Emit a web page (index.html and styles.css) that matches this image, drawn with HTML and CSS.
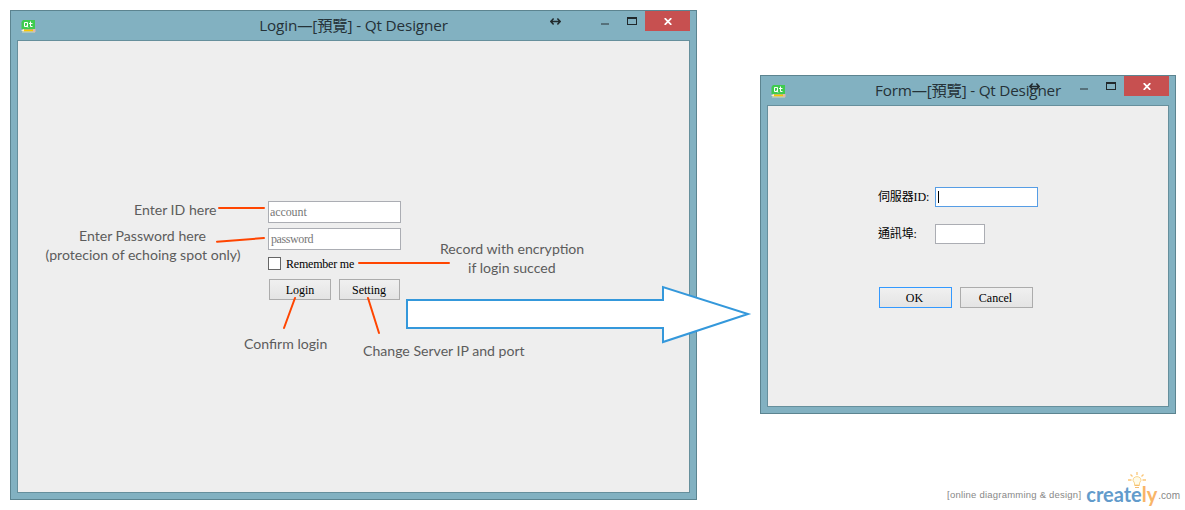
FILE: index.html
```
<!DOCTYPE html>
<html lang="zh-Hant">
<head>
<meta charset="utf-8">
<title>Login flow</title>
<link rel="stylesheet" href="styles.css">
</head>
<body>
<svg class="defs" width="0" height="0" aria-hidden="true">
  <symbol id="qt" viewBox="0 0 15 13">
    <path d="M2 0H14v9H.500V2z" fill="#3fcb4f"/>
    <path d="M2 9.500H12v2H2z" fill="#f8c800"/>
    <path d="M0 10.500l3-1.500v2.500z" fill="#fff3c8"/>
    <path d="M1 11.500h13v1H1z" fill="#d9d9b8"/>
    <path d="M12 9h2.500v3H12z" fill="#e3b8a8"/>
    <path d="M3.500 2.500h3v4h-3zM5.500 5.500l1.500 2M9.500 1.500v5h2M8 3.500h3.500" fill="none" stroke="#fff"/>
  </symbol>
  <symbol id="move" viewBox="0 0 11 7">
    <path d="M1 3.500H10M3.600 .600L.9 3.500L3.600 6.400M7.400 .600L10.100 3.500L7.400 6.400" fill="none" stroke="#222b2e" stroke-width="1.500"/>
  </symbol>
  <symbol id="cross" viewBox="0 0 8 7">
    <path d="M.7.200L7.300 6.800M7.300.200L.7 6.800" stroke="#fff" stroke-width="1.800"/>
  </symbol>
</svg>

<main class="canvas">
  <section class="window login-window">
    <header class="titlebar">
      <svg class="app-icon"><use href="#qt"/></svg>
      <h1 class="title">Login—[預覽] - Qt Designer</h1>
      <div class="controls">
        <svg class="move"><use href="#move"/></svg>
        <i class="minimize"></i>
        <i class="maximize"></i>
        <span class="close"><svg width="8" height="7"><use href="#cross"/></svg></span>
      </div>
    </header>
    <div class="client login-form">
      <div class="field account">account</div>
      <div class="field password">password</div>
      <div class="remember"><i class="checkbox"></i><span class="remember-text">Remember me</span></div>
      <div class="buttons login-buttons">
        <div class="button">Login</div>
        <div class="button setting">Setting</div>
      </div>
    </div>
  </section>

  <section class="window form-window">
    <header class="titlebar">
      <svg class="app-icon"><use href="#qt"/></svg>
      <h1 class="title form-title">Form—[預覽] - Qt Designer</h1>
      <div class="controls">
        <svg class="move"><use href="#move"/></svg>
        <i class="minimize"></i>
        <i class="maximize"></i>
        <span class="close"><svg width="8" height="7"><use href="#cross"/></svg></span>
      </div>
    </header>
    <div class="client server-form">
      <div class="row"><span class="label">伺服器ID:</span><div class="input server"><i class="caret"></i></div></div>
      <div class="row"><span class="label">通訊埠:</span><div class="input port"></div></div>
      <div class="buttons server-buttons">
        <div class="button ok">OK</div>
        <div class="button">Cancel</div>
      </div>
    </div>
  </section>

  <svg class="connectors" width="1185" height="510" viewBox="0 0 1185 510">
    <path d="M407 300H663V287L748 314L663 342V328H407Z" fill="#fff" stroke="#3498db" stroke-width="2"/>
    <path d="M219 208H264M217 241.700L264 238M359 263H449M295 298L284 328M368 298L379 333" fill="none" stroke="#ff4500" stroke-width="2" stroke-linecap="round"/>
  </svg>

  <p class="note note-id">Enter ID here</p>
  <p class="note note-password">Enter Password here</p>
  <p class="note note-echo">(protecion of echoing spot only)</p>
  <p class="note note-record">Record with encryption</p>
  <p class="note note-succeed">if login succed</p>
  <p class="note note-confirm">Confirm login</p>
  <p class="note note-server">Change Server IP and port</p>

  <footer class="brand">
    <span class="tagline">[online diagramming &amp; design]</span>
    <span class="wordmark">create<span class="ly">ly</span>
      <svg class="bulb" width="18" height="17" viewBox="0 0 18 17">
        <path d="M6.500 13V11Q4 8 5.500 6.200Q9 3 12.500 6.200Q14 8 11.500 11V13Z" fill="#fffbe9" stroke="#fad58c"/>
        <path d="M6.500 13.500h5M7 15.500h4" stroke="#f4bd70" stroke-width="1.200"/>
        <path d="M9 0v3M2.500 2.500l2 2M15.500 2.500l-2 2M0 8h3.500M14.500 8H18" stroke="#fbc677" stroke-width="1.300"/>
      </svg>
    </span>
    <span class="domain">.com</span>
  </footer>
</main>
</body>
</html>
```
FILE: styles.css
```
* { box-sizing: border-box; }

body {
  margin: 0;
  background: #fff;
  overflow: hidden;
}

.defs { position: absolute; }

.canvas {
  position: relative;
  width: 1185px;
  height: 510px;
}

.window {
  position: absolute;
  display: flex;
  flex-direction: column;
  padding: 0 6px 6px;
  background: #82b1c1;
  border: 1px solid #5c8490;
}

.login-window { left: 10px; top: 10px; width: 687px; height: 490px; }
.form-window { left: 760px; top: 75px; width: 416px; height: 339px; }

.titlebar {
  display: grid;
  height: 29px;
  flex: none;
}

.titlebar > * { grid-area: 1 / 1; }

.app-icon {
  width: 15px;
  height: 13px;
  margin: 9px 0 0 4px;
}

.title {
  margin: 0;
  font: 400 15.3px/29px "Open Sans", "Noto Sans CJK TC", sans-serif;
  letter-spacing: -.15px;
  color: #253238;
  text-align: center;
  white-space: nowrap;
}

.form-title { letter-spacing: -.22px; }

.controls {
  display: flex;
  justify-self: end;
  align-items: flex-start;
}

.move { width: 11px; height: 7px; margin: 7px 40px 0 0; }
.minimize { width: 8px; height: 2px; margin: 12px 18px 0 0; background: #56717b; }
.maximize { width: 10px; height: 8px; margin: 6px 8px 0 0; border: 1px solid #20282b; border-top-width: 2px; }

.close {
  display: flex;
  align-items: center;
  justify-content: center;
  width: 45px;
  height: 20px;
  background: #c75050;
}

.client {
  flex: 1;
  background: #eee;
  border: 1px solid #668f9c;
  font: 12px/15px "Liberation Serif", "Noto Sans CJK TC", serif;
  color: #000;
}

.login-form { padding: 160px 0 0 250px; }

.field {
  width: 133px;
  height: 22px;
  margin-bottom: 5px;
  padding: 3px 1px;
  background: #fff;
  border: 1px solid #abadb3;
  color: #777;
}

.password { padding-left: 2px; letter-spacing: -.4px; }
.account { letter-spacing: -.1px; }

.remember {
  display: flex;
  align-items: center;
  gap: 5px;
  height: 17px;
}

.remember-text { padding-top: 1px; letter-spacing: -.2px; }

.checkbox {
  width: 13px;
  height: 13px;
  background: #fff;
  border: 1px solid #666;
}

.buttons { display: flex; gap: 8px; }
.login-buttons { margin: 7px 0 0 1px; }

.button {
  width: 62px;
  height: 21px;
  border: 1px solid #acacac;
  background: linear-gradient(#f0f0f0, #e4e4e4);
  line-height: 20px;
  text-align: center;
}

.setting { width: 61px; padding-right: 1px; }

.server-form { padding: 81px 0 0 110px; }

.row {
  display: flex;
  align-items: center;
  height: 20px;
  margin-bottom: 17px;
}

.label { width: 57px; letter-spacing: -.15px; white-space: nowrap; }

.input {
  height: 20px;
  padding: 3px 2px;
  background: #fff;
  border: 1px solid #abadb3;
}

.server { width: 103px; border-color: #569de5; }
.port { width: 50px; }
.caret { display: block; width: 1px; height: 12px; background: #000; }

.server-buttons { margin: 43px 0 0 1px; }
.server-buttons .button { width: 73px; padding-right: 2px; }
.server-buttons .ok { border-color: #3399ff; }

.connectors { position: absolute; left: 0; top: 0; }

.note {
  position: absolute;
  margin: 0;
  font: 14.1px/18px Lato, sans-serif;
  color: #5c5c5c;
  white-space: nowrap;
}

.note-id { left: 134px; top: 201px; }
.note-password { left: 79px; top: 227px; }
.note-echo { left: 45.5px; top: 246px; }
.note-record { left: 440px; top: 240px; }
.note-succeed { left: 468px; top: 259px; }
.note-confirm { left: 244px; top: 335px; }
.note-server { left: 363px; top: 342px; }

.brand {
  position: absolute;
  right: 5px;
  bottom: 3px;
  display: flex;
  align-items: flex-end;
  font: 9.5px/12px "Liberation Sans", sans-serif;
  color: #888;
  white-space: nowrap;
}

.tagline { margin: 0 5px 6px 0; letter-spacing: .22px; }

.wordmark {
  position: relative;
  font: 700 20px/26px Lato, sans-serif;
  color: #629bcb;
}

.ly { color: #f9b568; }
.bulb { position: absolute; left: 42px; top: -9px; }
.domain { margin: 0 0 5px 1px; font-size: 10px; }
```
